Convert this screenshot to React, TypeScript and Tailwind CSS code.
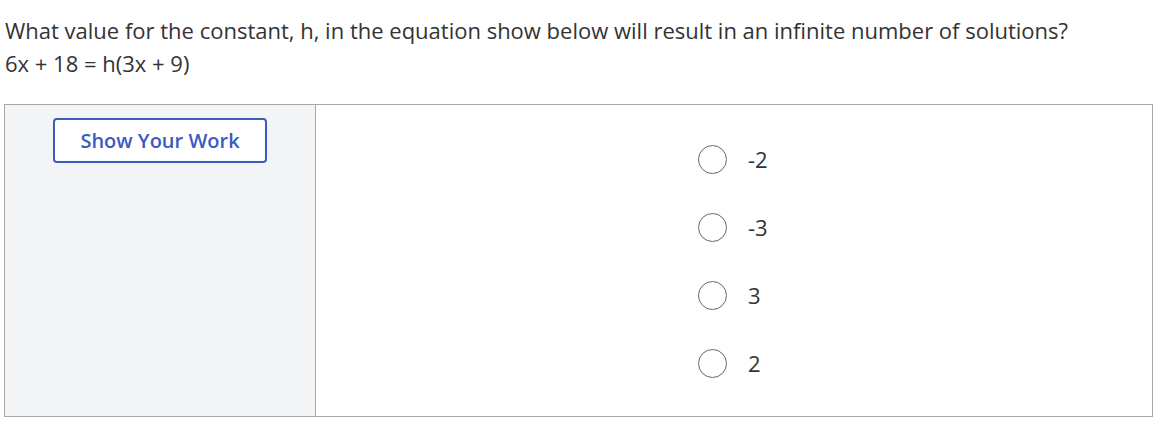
import React from 'react';

const options = ['-2', '-3', '3', '2'];

export default function App() {
  return (
    <div
      className="w-[1171px] h-[433px] bg-white text-[#333333]"
      style={{ fontFamily: '"Open Sans", sans-serif' }}
    >
      <div className="pl-[5px] pt-[14px] text-[22px] leading-[33px]">
        <p>What value for the constant, h, in the equation show below will result in an infinite number of solutions?</p>
        <p>6x + 18 = h(3x + 9)</p>
      </div>

      <div className="ml-[4px] mt-[24px] w-[1149px] h-[313px] border border-[#a8a8a8] flex">
        {/* Left work panel */}
        <div className="w-[311px] bg-[#f3f4f6] border-r border-[#a8a8a8] pt-[13px] pl-[48px]">
          <button className="w-[214px] h-[45px] rounded-[4px] border-2 border-[#3b5bbf] bg-white text-[#3b5bbf] text-[20px] font-semibold">
            Show Your Work
          </button>
        </div>

        {/* Answer options */}
        <div className="flex-1 flex flex-col pt-[40px] pl-[382px] gap-[40px]">
          {options.map((o) => (
            <label key={o} className="flex items-center h-[28px] gap-[21px] text-[22px]">
              <span className="w-[29px] h-[29px] rounded-full border border-[#666666] bg-white" />
              <span>{o}</span>
            </label>
          ))}
        </div>
      </div>
    </div>
  );
}
